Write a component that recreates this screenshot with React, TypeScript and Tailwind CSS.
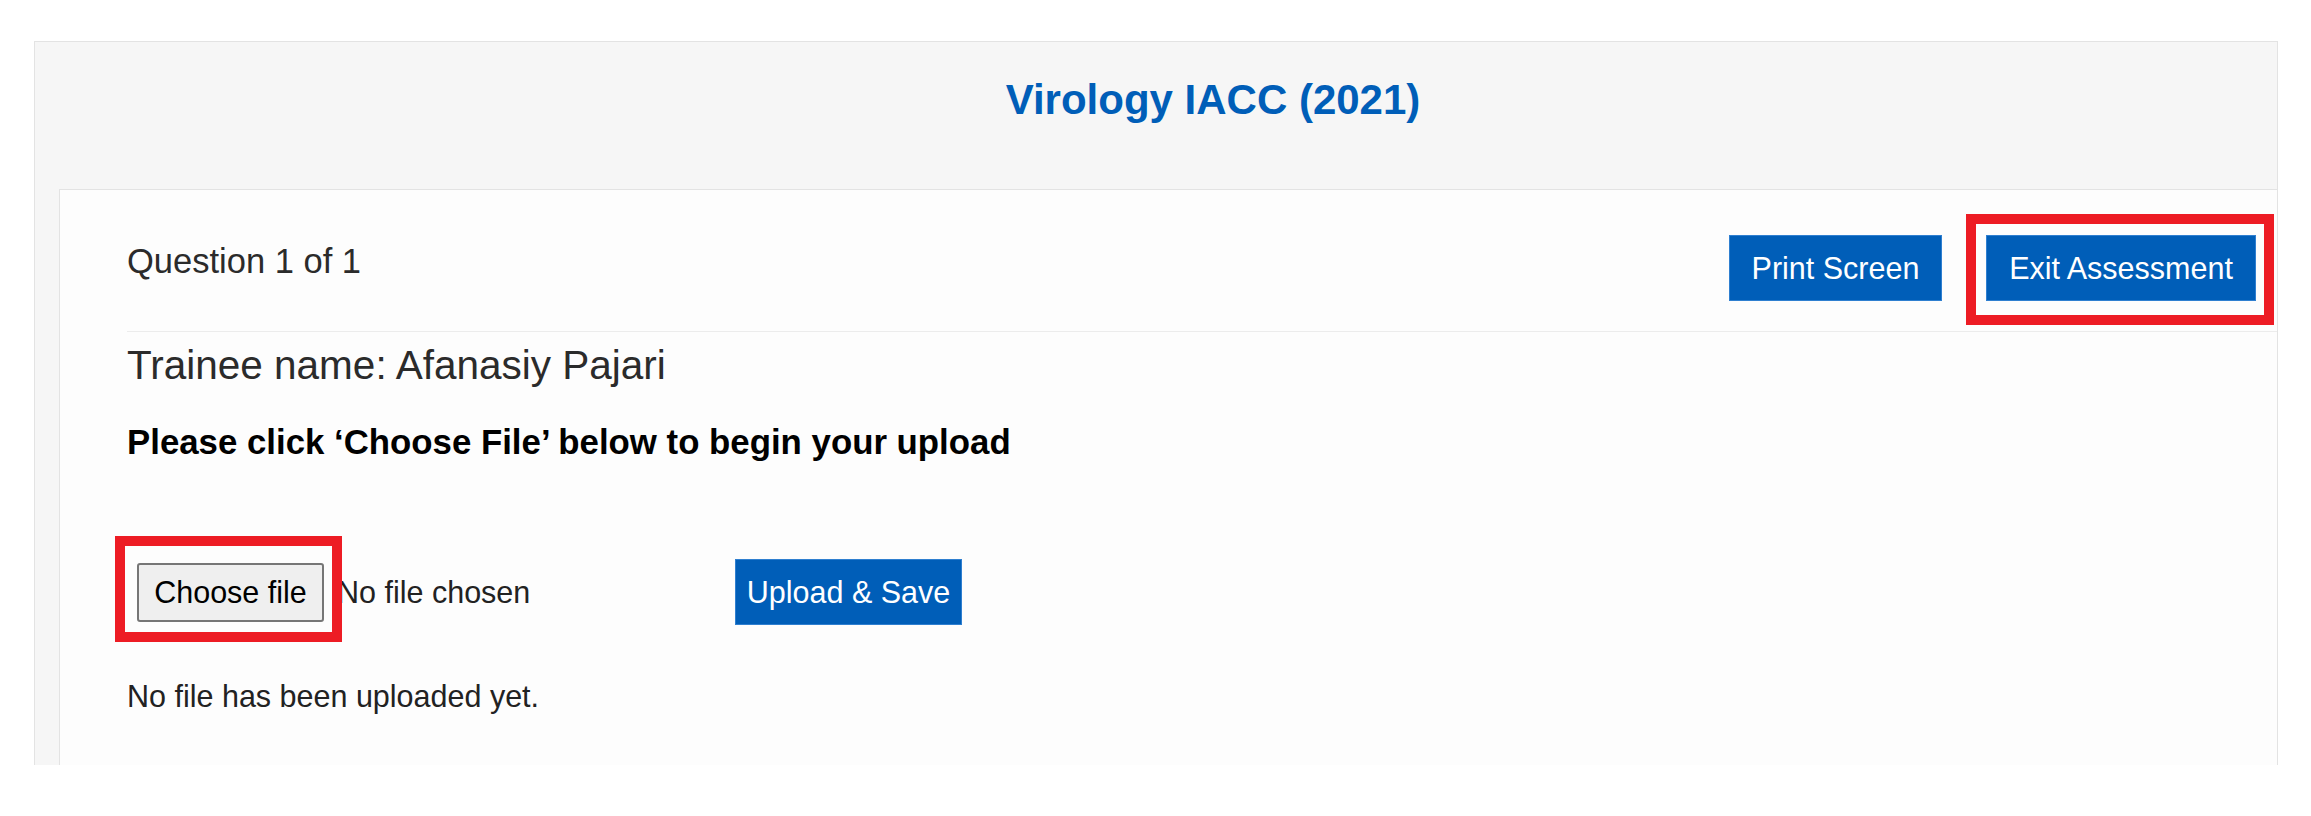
import React from 'react'

function BlueButton({ children, className = '' }: { children: React.ReactNode; className?: string }) {
  return (
    <button
      className={`h-[66px] bg-[#005eb8] border border-[#2f7fd0] text-white text-[30.5px] leading-none ${className}`}
    >
      {children}
    </button>
  )
}

export default function App() {
  return (
    <div className="min-h-screen bg-white text-[#222] font-['Liberation_Sans',Arial,sans-serif]">
      <div className="pt-[41px] pl-[34px] w-[2278px]">
        <div className="h-[724px] overflow-hidden border-t border-l border-r border-[#e3e3e3] bg-[#f6f6f6]">
          <div className="h-[147px] flex items-start justify-center pl-[114px] pt-[34px]">
            <h1 className="text-[42px] font-bold text-[#005eb8] leading-[48px]">Virology IACC (2021)</h1>
          </div>

          <div className="ml-[24px] h-full border-t border-l border-[#e3e3e3] bg-[#fdfdfd] pl-[67px]">
            {/* question header */}
            <div className="flex items-start justify-between pt-[45px] pr-[21px]">
              <div className="mt-[6px] text-[34.5px] leading-[40px] text-[#2b2b2b]">Question 1 of 1</div>
              <div className="flex items-center gap-[44px]">
                <BlueButton className="w-[213px]">Print Screen</BlueButton>
                <div className="relative">
                  <div className="absolute left-[-20px] right-[-18px] top-[-21px] bottom-[-24px] border-[10px] border-[#ed1c24]" />
                  <BlueButton className="relative w-[270px]">Exit Assessment</BlueButton>
                </div>
              </div>
            </div>

            <div className="mt-[30px] border-t border-[#ececec]" />

            <div className="mt-[10px] text-[40.5px] leading-[46px] text-[#2b2b2b]">Trainee name: Afanasiy Pajari</div>

            <div className="mt-[34px] text-[34.8px] leading-[40px] font-bold text-black">
              Please click ‘Choose File’ below to begin your upload
            </div>

            {/* upload row */}
            <div className="mt-[97px] flex items-center">
              <div className="w-[598px] ml-[10px] flex items-center">
                <div className="relative">
                  <div className="absolute left-[-22px] right-[-18px] top-[-27px] bottom-[-20px] border-[10px] border-[#ed1c24] z-10" />
                  <button className="w-[187px] h-[59px] bg-[#efefef] border-2 border-[#767676] rounded-[3px] text-[30.5px] leading-none text-black">
                    Choose file
                  </button>
                </div>
                <span className="ml-[13px] text-[30.5px] leading-none text-[#222]">No file chosen</span>
              </div>
              <BlueButton className="w-[227px]">Upload &amp; Save</BlueButton>
            </div>

            <div className="mt-[54px] text-[30.5px] leading-[35px] text-[#222]">No file has been uploaded yet.</div>
          </div>
        </div>
      </div>
    </div>
  )
}
